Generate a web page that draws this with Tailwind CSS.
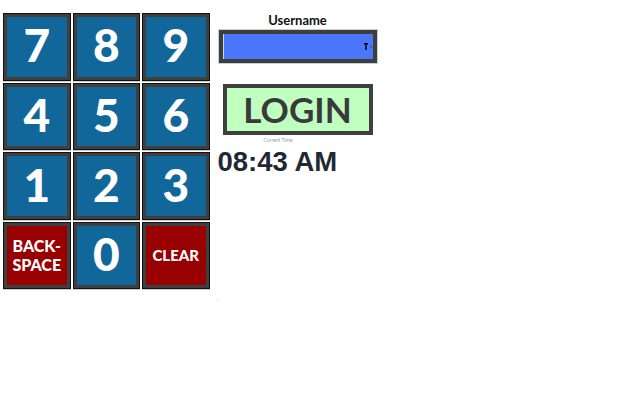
<!DOCTYPE html>
<html lang="en">
<head>
  <meta charset="UTF-8" />
  <title>Time Clock</title>
  <script src="https://cdn.jsdelivr.net/npm/@tailwindcss/browser@4"></script>
</head>
<body class="relative bg-white h-[400px] overflow-hidden font-['Lato',sans-serif]">
  <div class="flex items-start pt-[13px] pl-[3px]">
    <div class="grid grid-cols-[repeat(3,67.5px)] auto-rows-[67.5px] gap-[2px] text-white">
      <button class="bg-[#11669a] border-[4px] border-[#3f3f3f] outline outline-1 -outline-offset-1 outline-[#111] shadow-[0_1px_0_#ccc] text-[46px] leading-none pb-[4px] font-black">7</button>
      <button class="bg-[#11669a] border-[4px] border-[#3f3f3f] outline outline-1 -outline-offset-1 outline-[#111] shadow-[0_1px_0_#ccc] text-[46px] leading-none pb-[4px] font-black">8</button>
      <button class="bg-[#11669a] border-[4px] border-[#3f3f3f] outline outline-1 -outline-offset-1 outline-[#111] shadow-[0_1px_0_#ccc] text-[46px] leading-none pb-[4px] font-black">9</button>
      <button class="bg-[#11669a] border-[4px] border-[#3f3f3f] outline outline-1 -outline-offset-1 outline-[#111] shadow-[0_1px_0_#ccc] text-[46px] leading-none pb-[2px] font-black">4</button>
      <button class="bg-[#11669a] border-[4px] border-[#3f3f3f] outline outline-1 -outline-offset-1 outline-[#111] shadow-[0_1px_0_#ccc] text-[46px] leading-none pb-[2px] font-black">5</button>
      <button class="bg-[#11669a] border-[4px] border-[#3f3f3f] outline outline-1 -outline-offset-1 outline-[#111] shadow-[0_1px_0_#ccc] text-[46px] leading-none pb-[2px] font-black">6</button>
      <button class="bg-[#11669a] border-[4px] border-[#3f3f3f] outline outline-1 -outline-offset-1 outline-[#111] shadow-[0_1px_0_#ccc] text-[46px] leading-none pb-[2px] font-black">1</button>
      <button class="bg-[#11669a] border-[4px] border-[#3f3f3f] outline outline-1 -outline-offset-1 outline-[#111] shadow-[0_1px_0_#ccc] text-[46px] leading-none pb-[2px] font-black">2</button>
      <button class="bg-[#11669a] border-[4px] border-[#3f3f3f] outline outline-1 -outline-offset-1 outline-[#111] shadow-[0_1px_0_#ccc] text-[46px] leading-none pb-[2px] font-black">3</button>
      <button class="bg-[#990000] border-[4px] border-[#3f3f3f] outline outline-1 -outline-offset-1 outline-[#111] shadow-[0_1px_0_#ccc] text-[16px] leading-[19px] font-black">BACK-<br />SPACE</button>
      <button class="bg-[#11669a] border-[4px] border-[#3f3f3f] outline outline-1 -outline-offset-1 outline-[#111] shadow-[0_1px_0_#ccc] text-[46px] leading-none pb-[2px] font-black">0</button>
      <button class="bg-[#990000] border-[4px] border-[#3f3f3f] outline outline-1 -outline-offset-1 outline-[#111] shadow-[0_1px_0_#ccc] text-[15px] font-black">CLEAR</button>
    </div>

    <div class="ml-[8px] w-[160px] flex flex-col">
      <label class="text-center text-[13px] leading-[14px] font-bold text-[#111]">Username</label>
      <div class="mt-[2px] h-[35px] border border-[#b5d3f0]">
        <div class="h-full border-[4px] border-[#403f33] bg-[#4a76fb] flex items-center justify-end shadow-[inset_1px_0_0_#c5d5fa]">
          <svg width="12" height="9" viewBox="-2 0 12 9">
            <path d="M1 1h4v1.5H3.7V8H2.3V2.5H1z" fill="#000" />
            <path d="M7 4.5l1.2 1 1.2-1" fill="none" stroke="#333" stroke-width="0.7" />
          </svg>
        </div>
      </div>
      <button class="mt-[20px] mx-[5px] h-[51px] bg-[#bfffc0] border-[4px] border-[#3f3f3f] text-[#3a3a3a] text-[35px] leading-none font-bold">LOGIN</button>
      <div class="mt-[2px] pl-[46px] text-[5px] leading-[6px] text-[#999]">Current Time</div>
      <div class="mt-[3px] text-[27.5px] leading-[32px] font-bold text-[#1f2933] font-['Liberation_Sans',sans-serif] whitespace-nowrap">08:43 AM</div>
    </div>
  </div>
  <div class="absolute left-[217px] top-[300px] w-px h-px bg-[#ccc]"></div>
</body>
</html>
